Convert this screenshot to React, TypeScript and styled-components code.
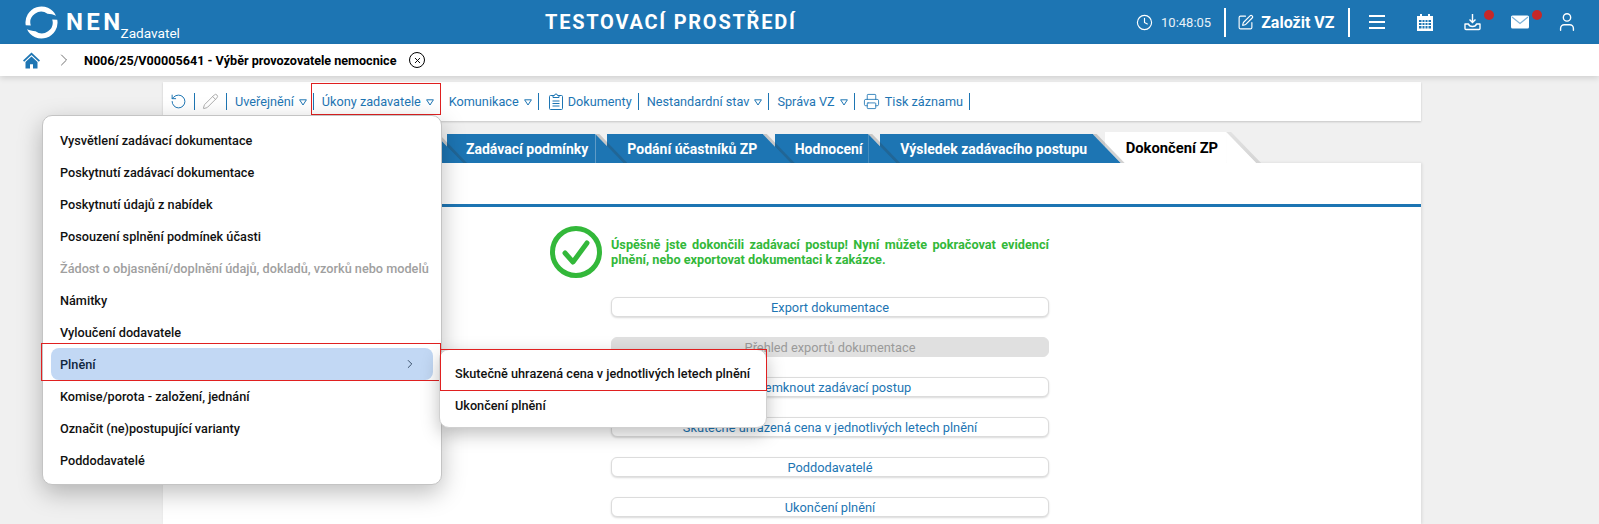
import React from "react";
import styled, { createGlobalStyle } from "styled-components";
import { ChevronRight, Clock, Pencil, Printer, RotateCcw, SquarePen, User, X } from "lucide-react";

const BLUE = "#1d75b3";

const GlobalStyle = createGlobalStyle`
    html, body {
        margin: 0;
        height: 100%;
        overflow: hidden;
        background: #f0f0f0;
        font-family: Roboto, "Liberation Sans", sans-serif;
    }
`;

const swoosh = "M31 9.700A16 16 0 0 0 0.740 19.300L5.800 19.600A10.800 10.800 0 0 1 22.500 7.800C25.500 8 28.500 8.600 31 9.700Z";

const Logo = () => (
    <svg width="33" height="33" viewBox="0 0 33 33" fill="#fff">
        <path d={swoosh} />
        <path d={swoosh} transform="rotate(180 16.5 16.5)" />
    </svg>
);

const CalendarIcon = () => (
    <svg width="18" height="18" viewBox="0 0 18 18">
        <path fill="#fff" d="M1 3h3V1h2v2h6V1h2v2h3v15H1z" />
        <path fill={BLUE} d="M3 7h12v8.500H3z" />
        <path stroke="#fff" strokeWidth="1" d="M3 9.500h12M3 12.500h12M6 7v9M9 7v9M12 7v9" />
    </svg>
);

const TrayIcon = () => (
    <svg width="17" height="18" viewBox="0 0 17 18" fill="none" stroke="#fff" strokeWidth="1.4">
        <path d="M8.500 1v8M5.500 6.500l3 3 3-3" />
        <path d="M1 11h3.500c.5 2 1.500 2.500 4 2.500s3.500-.5 4-2.500H16v4.500a1 1 0 0 1-1 1H2a1 1 0 0 1-1-1z" strokeLinejoin="round" />
    </svg>
);

const MailIcon = () => (
    <svg width="18" height="14" viewBox="0 0 18 14">
        <rect width="18" height="13" y="0.5" rx="1.5" fill="#fff" />
        <path d="M1 2l8 6.500L17 2" fill="none" stroke="#7fb3d8" strokeWidth="1.2" />
    </svg>
);

const HomeIcon = () => (
    <svg width="17" height="17" viewBox="0 0 17 17" fill={BLUE}>
        <path d="M8.500 0.500L0 8.500l1.200 1.200 7.300-6.700 7.300 6.700L17 8.500z" />
        <path d="M8.500 4.600L2.500 10v6.500H7v-4.300h3v4.300h4.500V10z" />
    </svg>
);

const ClipboardIcon = () => (
    <ClipboardMark width="14" height="17" viewBox="0 0 14 17" fill="none" stroke={BLUE} strokeWidth="1">
        <path d="M4 2.500H1.500a1 1 0 0 0-1 1v12a1 1 0 0 0 1 1h11a1 1 0 0 0 1-1v-12a1 1 0 0 0-1-1H10" />
        <path d="M4 4.500V2.500h1.500a1.500 1.500 0 0 1 3 0H10v2z" />
        <path d="M3.500 8h7M3.500 10.500h7M3.500 13h7" />
    </ClipboardMark>
);

const SuccessIcon = () => (
    <svg width="52" height="52" viewBox="0 0 52 52" fill="none" stroke="#33b83a">
        <circle cx="26" cy="26" r="23.500" strokeWidth="5" />
        <path d="M15 27l8 9 14-19" strokeWidth="5" strokeLinecap="round" strokeLinejoin="round" />
    </svg>
);

const Caret = () => (
    <CaretMark width="8" height="7" viewBox="0 0 8 7">
        <path d="M0.600 0.800h6.800L4 6z" fill="none" stroke={BLUE} strokeWidth="1" />
    </CaretMark>
);

const menuItems = [
    "Vysvětlení zadávací dokumentace",
    "Poskytnutí zadávací dokumentace",
    "Poskytnutí údajů z nabídek",
    "Posouzení splnění podmínek účasti",
    "Žádost o objasnění/doplnění údajů, dokladů, vzorků nebo modelů",
    "Námitky",
    "Vyloučení dodavatele",
    "Plnění",
    "Komise/porota - založení, jednání",
    "Označit (ne)postupující varianty",
    "Poddodavatelé",
];

const actions = [
    "Export dokumentace",
    "Přehled exportů dokumentace",
    "Odemknout zadávací postup",
    "Skutečně uhrazená cena v jednotlivých letech plnění",
    "Poddodavatelé",
    "Ukončení plnění",
];

function App() {
    return (
        <Page>
            <GlobalStyle />
            <Header>
                <Brand>
                    <Logo />
                    <BrandName>NEN</BrandName>
                    <BrandRole>Zadavatel</BrandRole>
                </Brand>
                <EnvTitle>TESTOVACÍ PROSTŘEDÍ</EnvTitle>
                <HeaderRight>
                    <Clock size={17} strokeWidth={1.6} />
                    <Time>10:48:05</Time>
                    <HeaderSep $after={11} />
                    <SquarePen size={17} strokeWidth={1.6} />
                    <CreateLabel>Založit VZ</CreateLabel>
                    <HeaderSep $after={4} />
                    <IconSlot>
                        <Burger />
                    </IconSlot>
                    <IconSlot>
                        <CalendarIcon />
                    </IconSlot>
                    <IconSlot>
                        <TrayIcon />
                        <Badge />
                    </IconSlot>
                    <IconSlot>
                        <MailIcon />
                        <Badge />
                    </IconSlot>
                    <IconSlot>
                        <User size={22} strokeWidth={1.5} />
                    </IconSlot>
                </HeaderRight>
            </Header>

            <Breadcrumb>
                <HomeIcon />
                <ChevronRight size={20} strokeWidth={1} color="#555" />
                <CrumbTitle>N006/25/V00005641 - Výběr provozovatele nemocnice</CrumbTitle>
                <CloseCircle>
                    <X size={9} strokeWidth={2.5} />
                </CloseCircle>
            </Breadcrumb>

            <Main>
                <Toolbar>
                    <ToolIcon><RotateCcw size={17} strokeWidth={1.4} color={BLUE} /></ToolIcon>
                    <ToolIcon><Pencil size={17} strokeWidth={1.2} color="#a0a0a0" /></ToolIcon>
                    <ToolItem>Uveřejnění<Caret /></ToolItem>
                    <ToolItem $marked>Úkony zadavatele<Caret /></ToolItem>
                    <ToolItem>Komunikace<Caret /></ToolItem>
                    <ToolItem><ClipboardIcon />Dokumenty</ToolItem>
                    <ToolItem>Nestandardní stav<Caret /></ToolItem>
                    <ToolItem>Správa VZ<Caret /></ToolItem>
                    <ToolItem><Printer size={17} strokeWidth={1.2} color={BLUE} />Tisk záznamu</ToolItem>
                </Toolbar>

                <Tabs>
                    <HiddenTab />
                    <Tab $first>Zadávací podmínky</Tab>
                    <Tab>Podání účastníků ZP</Tab>
                    <Tab>Hodnocení</Tab>
                    <Tab>Výsledek zadávacího postupu</Tab>
                    <ActiveTab>Dokončení ZP</ActiveTab>
                </Tabs>

                <TabPanel>
                    <Content>
                        <Message>
                            <SuccessIcon />
                            <MessageText>
                                Úspěšně jste dokončili zadávací postup! Nyní můžete pokračovat evidencí plnění, nebo exportovat dokumentaci k zakázce.
                            </MessageText>
                        </Message>
                        <Actions>
                            {actions.map((label, i) => (
                                <ActionButton key={label} $disabled={i === 1}>{label}</ActionButton>
                            ))}
                        </Actions>
                    </Content>
                </TabPanel>
            </Main>

            <Menu>
                {menuItems.map((label, i) => (
                    <MenuItem key={label} $disabled={i === 4} $active={label === "Plnění"}>
                        {label}
                        {label === "Plnění" && <ChevronRight size={14} strokeWidth={1.3} />}
                    </MenuItem>
                ))}
            </Menu>
            <SubMenu>
                <SubItem $marked>Skutečně uhrazená cena v jednotlivých letech plnění</SubItem>
                <SubItem>Ukončení plnění</SubItem>
            </SubMenu>
        </Page>
    );
}

const Page = styled.div`
    position: relative;
    height: 524px;
    overflow: hidden;
`;

const Header = styled.header`
    display: flex;
    align-items: center;
    height: 44px;
    background: ${BLUE};
    color: #fff;
`;

const Brand = styled.div`
    display: flex;
    align-items: center;
    width: 545px;
    padding-left: 25px;
    box-sizing: border-box;
`;

const BrandName = styled.span`
    margin-left: 8px;
    font-size: 24px;
    font-weight: 700;
    letter-spacing: 3.4px;
`;

const BrandRole = styled.span`
    margin: 21px 0 0 -3px;
    font-size: 13.6px;
`;

const EnvTitle = styled.div`
    font-size: 20px;
    font-weight: 700;
    letter-spacing: 1.75px;
    white-space: nowrap;
`;

const HeaderRight = styled.div`
    display: flex;
    align-items: center;
    margin-left: auto;
    padding-right: 8px;
    height: 100%;
`;

const Time = styled.span`
    margin: 0 13px 0 8px;
    font-size: 13px;
    color: #e8f1f8;
`;

const HeaderSep = styled.span<{ $after: number }>`
    width: 2px;
    height: 29px;
    margin-right: ${(p) => p.$after}px;
    background: #fff;
`;

const CreateLabel = styled.span`
    margin: 0 13px 0 7px;
    font-size: 16px;
    font-weight: 700;
`;

const IconSlot = styled.span`
    position: relative;
    display: flex;
    align-items: center;
    justify-content: center;
    width: 47.500px;
    height: 24px;
`;

const Burger = styled.span`
    display: block;
    width: 16px;
    height: 2px;
    background: #fff;
    box-shadow: 0 -6px 0 #fff, 0 6px 0 #fff;
`;

const Badge = styled.span`
    position: absolute;
    top: 0;
    right: 2px;
    width: 10px;
    height: 10px;
    border-radius: 50%;
    background: #c62828;
`;

const Breadcrumb = styled.nav`
    position: relative;
    z-index: 2;
    display: flex;
    align-items: center;
    height: 32px;
    padding-left: 23px;
    background: #fff;
    box-shadow: 0 2px 6px rgba(0, 0, 0, 0.14);
    & > svg:nth-child(2) {
        margin-left: 14px;
    }
`;

const CrumbTitle = styled.span`
    margin-left: 10px;
    font-size: 12.6px;
    font-weight: 700;
    color: #000;
`;

const CloseCircle = styled.span`
    display: flex;
    align-items: center;
    justify-content: center;
    width: 14px;
    height: 14px;
    margin-left: 13px;
    border: 1px solid #000;
    border-radius: 50%;
`;

const Main = styled.main`
    width: 1258px;
    margin: 6px 0 0 163px;
`;

const Toolbar = styled.div`
    display: flex;
    align-items: center;
    height: 39px;
    background: #fff;
    box-shadow: 0 1px 2px rgba(0, 0, 0, 0.18);
`;

const ToolIcon = styled.span`
    display: flex;
    align-items: center;
    justify-content: center;
    width: 32px;
    height: 17px;
    box-sizing: border-box;
    border-right: 1px solid ${BLUE};
`;

const ToolItem = styled.span<{ $marked?: boolean }>`
    position: relative;
    display: flex;
    align-items: center;
    gap: 5px;
    height: 17px;
    padding: 0 6px 0 8px;
    border-right: 1px solid ${BLUE};
    font-size: 12.7px;
    color: ${BLUE};
    white-space: nowrap;
    &::after {
        content: "";
        display: ${(p) => (p.$marked ? "block" : "none")};
        position: absolute;
        top: -10px;
        bottom: -5px;
        left: -3px;
        right: -1px;
        border: 1px solid #e02020;
    }
`;

const CaretMark = styled.svg`
    flex: none;
    margin-top: 1px;
`;

const ClipboardMark = styled.svg`
    flex: none;
    margin-left: 2px;
`;

const Tabs = styled.div`
    display: flex;
    align-items: flex-end;
    height: 31px;
    margin-top: 11px;
`;

const Tab = styled.div<{ $first?: boolean }>`
    position: relative;
    display: flex;
    align-items: center;
    height: 29px;
    margin-right: 12px;
    padding: 0 ${(p) => (p.$first ? "7px" : "5.5px")} 0 ${(p) => (p.$first ? "19px" : "20px")};
    background: ${BLUE};
    color: #fff;
    font-size: 14px;
    font-weight: 700;
    white-space: nowrap;
    &:nth-child(1) { z-index: 6; }
    &:nth-child(2) { z-index: 5; }
    &:nth-child(3) { z-index: 4; }
    &:nth-child(4) { z-index: 3; }
    &:nth-child(5) { z-index: 2; }
    &::before {
        content: "";
        position: absolute;
        top: 0;
        left: 100%;
        width: 32px;
        height: 100%;
        background: rgba(50, 50, 50, 0.22);
        clip-path: polygon(0 0, 4px 0, 100% 100%, 28px 100%);
    }
    &::after {
        content: "";
        position: absolute;
        top: 0;
        left: 100%;
        width: 28px;
        height: 100%;
        background: ${BLUE};
        clip-path: polygon(0 0, 0 100%, 100% 100%);
    }
`;

const HiddenTab = styled(Tab)`
    width: 272px;
    padding: 0;
`;

const ActiveTab = styled.div`
    position: relative;
    display: flex;
    align-items: center;
    height: 31px;
    padding: 0 8px 0 21px;
    background: #fff;
    color: #000;
    font-size: 14.75px;
    font-weight: 700;
    white-space: nowrap;
    &::before {
        content: "";
        position: absolute;
        top: 0;
        left: 100%;
        width: 35px;
        height: 100%;
        background: linear-gradient(#e2e2e2, #d4d4d4);
        clip-path: polygon(0 0, 5px 0, 100% 100%, 30px 100%);
    }
    &::after {
        content: "";
        position: absolute;
        top: 0;
        left: 100%;
        width: 30px;
        height: 100%;
        background: #fff;
        clip-path: polygon(0 0, 0 100%, 100% 100%);
    }
`;

const TabPanel = styled.section`
    height: 361px;
    padding-top: 41px;
    box-sizing: border-box;
    background: #fff;
    box-shadow: 1px 0 3px rgba(0, 0, 0, 0.1);
`;

const Content = styled.div`
    padding: 19px 0 0 387px;
    border-top: 3px solid ${BLUE};
`;

const Message = styled.div`
    display: flex;
    align-items: center;
    gap: 9px;
    width: 499px;
`;

const MessageText = styled.p`
    margin: 0;
    flex: 1;
    font-size: 12.7px;
    font-weight: 700;
    line-height: 15px;
    text-align: justify;
    color: #33b83a;
`;

const Actions = styled.div`
    display: flex;
    flex-direction: column;
    gap: 20px;
    width: 438px;
    margin: 19px 0 0 61px;
`;

const ActionButton = styled.div<{ $disabled?: boolean }>`
    height: 20px;
    box-sizing: border-box;
    border: 1px solid ${(p) => (p.$disabled ? "#e0e0e0" : "#dcdcdc")};
    border-radius: 6px;
    background: ${(p) => (p.$disabled ? "#e0e0e0" : "#fff")};
    box-shadow: ${(p) => (p.$disabled ? "none" : "0 1px 2px rgba(0, 0, 0, 0.15)")};
    color: ${(p) => (p.$disabled ? "#9a9a9a" : BLUE)};
    font-size: 12.8px;
    line-height: 19px;
    text-align: center;
`;

const Menu = styled.ul`
    position: absolute;
    z-index: 10;
    top: 115px;
    left: 42px;
    width: 400px;
    margin: 0;
    padding: 8px 8px 8px;
    box-sizing: border-box;
    list-style: none;
    background: #fff;
    border: 1px solid #c4c4c4;
    border-radius: 10px;
    box-shadow: 0 8px 24px rgba(0, 0, 0, 0.26);
`;

const MenuItem = styled.li<{ $disabled?: boolean; $active?: boolean }>`
    position: relative;
    display: flex;
    align-items: center;
    justify-content: space-between;
    height: 32px;
    padding: 0 16px 0 9px;
    border-radius: 8px;
    background: ${(p) => (p.$active ? "#c2d8f4" : "transparent")};
    color: ${(p) => (p.$disabled ? "#a0a0a0" : p.$active ? "#10263f" : "#111")};
    font-size: 12.7px;
    font-weight: 500;
    white-space: nowrap;
    &::after {
        content: "";
        display: ${(p) => (p.$active ? "block" : "none")};
        position: absolute;
        top: -5px;
        bottom: -1px;
        left: -10px;
        right: -8px;
        border: 1px solid #e02020;
    }
`;

const SubMenu = styled.ul`
    position: absolute;
    z-index: 11;
    top: 349px;
    left: 439px;
    width: 328px;
    margin: 0;
    padding: 7px 0 6px;
    box-sizing: border-box;
    list-style: none;
    background: #fff;
    border: 1px solid #d0d0d0;
    border-radius: 10px;
    box-shadow: 0 6px 18px rgba(0, 0, 0, 0.25);
`;

const SubItem = styled.li<{ $marked?: boolean }>`
    position: relative;
    display: flex;
    align-items: center;
    height: 32px;
    padding-left: 15px;
    color: #111;
    font-size: 12.7px;
    font-weight: 500;
    white-space: nowrap;
    &::after {
        content: "";
        display: ${(p) => (p.$marked ? "block" : "none")};
        position: absolute;
        top: -8px;
        bottom: -2px;
        left: 0;
        right: -1px;
        border: 1px solid #e02020;
    }
`;

export default App;
